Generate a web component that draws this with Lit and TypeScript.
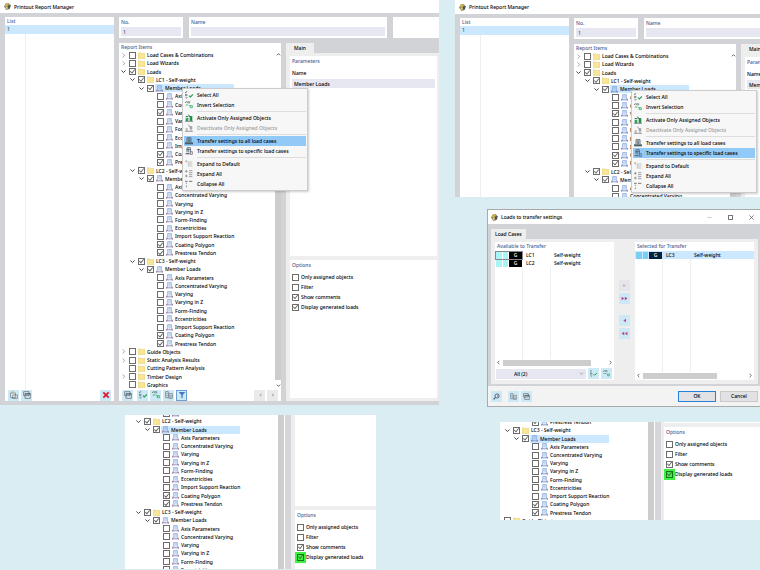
import { LitElement, html, css, svg, nothing } from "lit";
import { customElement, property } from "lit/decorators.js";
import { classMap } from "lit/directives/class-map.js";

type Row = { level: number; label: string; on?: boolean; kind?: "folder" | "member"; exp?: "open" | "closed" };

const ITEMS = [
  "Axis Parameters",
  "Concentrated Varying",
  "Varying",
  "Varying in Z",
  "Form-Finding",
  "Eccentricities",
  "Import Support Reaction",
  "Coating Polygon",
  "Prestress Tendon",
];

const loadCase = (n: number, extra: string[] = []): Row[] => [
  { level: 1, label: `LC${n} - Self-weight`, on: true, kind: "folder", exp: "open" },
  { level: 2, label: "Member Loads", on: true, kind: "member", exp: "open" },
  ...ITEMS.map((label, i) => ({ level: 3, label, on: i > 6 || extra.includes(label), kind: "member" as const })),
];

const FULL: Row[] = [
  { level: 0, label: "Load Cases & Combinations", exp: "closed" },
  { level: 0, label: "Load Wizards", exp: "closed" },
  { level: 0, label: "Loads", on: true, exp: "open" },
  ...loadCase(1, ["Varying"]),
  ...loadCase(2),
  ...loadCase(3),
  { level: 0, label: "Guide Objects", exp: "closed" },
  { level: 0, label: "Static Analysis Results", exp: "closed" },
  { level: 0, label: "Cutting Pattern Analysis" },
  { level: 0, label: "Timber Design", exp: "closed" },
  { level: 0, label: "Graphics" },
];

const ICONS: Record<string, unknown> = {
  app: svg`<path d="M0 6 3 1l5-1 3 4-1 6-6 2z" fill="#8a8560"/><path d="M1 5l4-4 4 0-3 4z" fill="#d8b840"/><path d="M6 5l5-2 0 4-3 4z" fill="#4c5560"/><path d="M3 6h3v4H3z" fill="#e8d070"/>`,
  folder: svg`<path d="M0 1.500h5l1 1h6v9H0z" fill="#f8e694" stroke="#e6d080" stroke-width="1"/>`,
  member: svg`<path d="M2.500 10V1h7v9M5 1v7M7.200 1v7" fill="none" stroke="#7c9fdc" stroke-width="1.100"/><path d="M0 10h12" stroke="#6877b4" stroke-width="1.300"/><path d="M.6 8v3.500M11.400 8v3.500" stroke="#b07090" stroke-width="1.200"/>`,
  select: svg`<path d="M0 1l1 2 2-3M0 5h3v2H0z M1 9l1 2 2-2" fill="none" stroke="#58666a" stroke-width="1"/><path d="M6 7l2 2 4-4" fill="none" stroke="#20a050" stroke-width="1.700"/>`,
  invert: svg`<path d="M0 1l1 2 2-3M4 1h3v2H4z" fill="none" stroke="#58766a" stroke-width="1"/><path d="M1 6h4M6 7h2v3h3V7H8" fill="none" stroke="#30a868" stroke-width="1.200"/>`,
  activate: svg`<path d="M1 6h4v5H1zM7 3h4v8H7z" fill="#30a060"/><path d="M1 4h4M5 1l3 4M9 5v4" stroke="#1b7040" stroke-width="1.500"/><path d="M0 11h12" stroke="#666" stroke-width="1"/>`,
  deactivate: svg`<path d="M1 6h3v5H1zM7 3h4v5H7z" fill="#bbb"/><path d="M5 1l3 4M9 4v7M0 11h12" stroke="#888" stroke-width="1.200"/>`,
  transferAll: svg`<path d="M3 8V1h6v7M5 2v6M7 2v6" fill="none" stroke="#51606c" stroke-width="1.300"/><path d="M0 8h12v3H0z" fill="#4c5c6a"/>`,
  transferOne: svg`<path d="M3 8V1h5v7M5 2v6M2 4h7" fill="none" stroke="#51606c" stroke-width="1.200"/><path d="M1 9h6v2H1z" fill="#66727c"/><path d="M8 7h3v4H8z" fill="none" stroke="#556"/>`,
  expandDef: svg`<path d="M0 2h4M2 0v4M5 3h6M6 6h5M6 9h5M5 3v7" fill="none" stroke="#aaa" stroke-width="1"/>`,
  expandAll: svg`<path d="M0 2h4M2 0v4M0 9h4M2 7v4M6 1h5M6 4h5M6 7h5M6 10h5" fill="none" stroke="#888" stroke-width="1.200"/>`,
  collapse: svg`<path d="M0 2h4M6 2h5" stroke="#777" stroke-width="1.500"/><path d="M2 4v2M2 8v3" stroke="#999" stroke-width="1.500"/>`,
  windows: svg`<path d="M1 1h8v6H1zM3 4h8v7H3z" fill="#dfeaf0" stroke="#4a5a66" stroke-width="1"/><path d="M3 4.500h8" stroke="#4a5a66" stroke-width="1.500"/>`,
  addWindow: svg`<path d="M1 3h7v7H1zM4 6h7v5H4z" fill="#f2f4f4" stroke="#59666e" stroke-width="1"/><path d="M2 1.500h4" stroke="#d0ae40" stroke-width="1.500"/>`,
  list: svg`<path d="M1 1h4v9H1zM6 4h5v7H6z" fill="#e4eef2" stroke="#5a6a74" stroke-width="1"/><path d="M2 4h2M2 7h2M7 7h3M7 9h3" stroke="#5a6a74"/>`,
  filter: svg`<path d="M1 1.500h10L7 6v5L5 10V6z" fill="#4878b8"/>`,
  x: svg`<path d="M2 2l8 8M10 2l-8 8" stroke="#e01830" stroke-width="2.600"/>`,
  left: svg`<path d="M8 3.500L5 6l3 2.500z" fill="#aaa"/>`,
  right: svg`<path d="M5 3.500L8 6 5 8.500z" fill="#aaa"/>`,
  moveR: svg`<path d="M4 3.500L8 6 4 8.500z" fill="#c8a0b8"/>`,
  moveRR: svg`<path d="M1 3l4.500 3L1 9zM6.500 3L11 6 6.500 9z" fill="#b83c98"/>`,
  moveL: svg`<path d="M8.500 3L4 6l4.500 3z" fill="#b83c98"/>`,
  moveLL: svg`<path d="M11 3L6.500 6 11 9zM5.500 3L1 6l4.500 3z" fill="#c83c80"/>`,
  search: svg`<circle cx="7" cy="5" r="3.500" fill="#fff" stroke="#34506a" stroke-width="1.500"/><path d="M4 8l-3 3" stroke="#34506a" stroke-width="2"/><path d="M6 4h3M7 6h2" stroke="#34506a"/>`,
  caretR: svg`<path d="M4 1l5 5-5 5" fill="none" stroke="#777" stroke-width="1.600"/>`,
  caretD: svg`<path d="M1 3.500l5 5 5-5" fill="none" stroke="#333" stroke-width="2.200"/>`,
  up: svg`<path d="M2 8l4-4 4 4" fill="none" stroke="#444" stroke-width="2"/>`,
  down: svg`<path d="M2 4l4 4 4-4" fill="none" stroke="#444" stroke-width="2"/>`,
  arrowL: svg`<path d="M8 2L4 6l4 4" fill="none" stroke="#555" stroke-width="2"/>`,
  arrowR: svg`<path d="M4 2l4 4-4 4" fill="none" stroke="#555" stroke-width="2"/>`,
  min: svg`<path d="M1 6h10" stroke="#aaa" stroke-width="1.500"/>`,
  max: svg`<path d="M1 1h10v10H1z" fill="none" stroke="#333" stroke-width="1.800"/>`,
  close: svg`<path d="M1 1l10 10M11 1L1 11" stroke="#444" stroke-width="1.600"/>`,
};

const icon = (name: string) => html`<svg class="icon" viewBox="0 0 12 12" aria-hidden="true">${ICONS[name]}</svg>`;

const base = css`
  * { box-sizing: border-box; }
  :host { display: block; font: 500 5px/8px "Noto Sans", "Open Sans", sans-serif; color: #000; }
  .icon { width: 7px; height: 7px; flex: none; display: block; }
  button {
    font: inherit; color: inherit; padding: 0; margin: 0; border: 0; background: none;
    display: flex; align-items: center; justify-content: center; flex: none;
  }
  input { font: inherit; color: inherit; margin: 0; }
  input[type="checkbox"] {
    appearance: none; width: 7px; height: 7px; border: 1px solid #6c6c6c; background: #fff; flex: none; display: grid;
  }
  input[type="checkbox"]:checked::before {
    content: ""; background: #555;
    clip-path: polygon(0 50%, 15% 40%, 38% 68%, 88% 5%, 100% 15%, 40% 95%);
  }
  .heading { color: #4a6092; }
  .tool { width: 11px; height: 11px; background: #cde9f6; }
`;

@customElement("report-tree")
class ReportTree extends LitElement {
  @property({ attribute: false }) rows: Row[] = [];
  @property({ type: Number }) selected = -1;

  static styles = [base, css`
    :host { display: grid; grid-auto-rows: 1fr; min-width: 0; }
    .row { display: flex; align-items: center; min-height: 0; white-space: nowrap; }
    .l1 { padding-left: 9px; }
    .l2 { padding-left: 18px; }
    .l3 { padding-left: 28px; }
    .expander { width: 8px; height: 8px; margin: 0 2px 0 0; }
    .expander .icon { width: 5px; height: 5px; }
    .node { display: flex; align-items: center; gap: 2px; height: 8px; margin-left: 1px; padding-left: 1px; min-width: 79px; }
    .picked { background: #cce8ff; }
  `];

  render() {
    return this.rows.map((r, i) => html`
      <div class="row l${r.level}">
        <button class="expander" ?disabled=${!r.exp} aria-label="Toggle ${r.label}">
          ${r.exp ? icon(r.exp === "open" ? "caretD" : "caretR") : nothing}
        </button>
        <input type="checkbox" id="c${i}" ?checked=${r.on} />
        <label for="c${i}" class=${classMap({ node: true, picked: i === this.selected })}>
          ${icon(r.kind ?? "folder")}<span>${r.label}</span>
        </label>
      </div>`);
  }
}

@customElement("load-options")
class LoadOptions extends LitElement {
  @property({ type: Boolean }) marked = false;

  static styles = [base, css`
    :host { display: block; background: #fff; padding: 1px 2px; }
    .heading { margin-bottom: 3px; }
    .option { display: flex; align-items: center; gap: 2px; height: 10px; white-space: nowrap; }
    input.mark { background: #3cf040; box-shadow: 0 0 0 2px #3cf040; border-color: #1c7020; }
  `];

  render() {
    const options: [string, boolean][] = [
      ["Only assigned objects", false], ["Filter", false], ["Show comments", true], ["Display generated loads", true],
    ];
    return html`
      <div class="heading">Options</div>
      ${options.map(([label, on], i) => html`
        <label class="option">
          <input type="checkbox" class=${classMap({ mark: this.marked && i === 3 })} ?checked=${on} />${label}
        </label>`)}`;
  }
}

@customElement("context-menu")
class ContextMenu extends LitElement {
  @property({ type: Number }) active = 4;

  static styles = [base, css`
    :host { display: block; width: 126px; padding: 1px; background: #f7f7f7; border: 1px solid #ccc; box-shadow: 1px 1px 2px #0003; }
    .item { width: 100%; height: 10px; padding-left: 1px; gap: 4px; justify-content: flex-start; white-space: nowrap; }
    .item .icon { width: 8px; height: 8px; }
    .active { background: #91c9f7; }
    .item:disabled { color: #999; }
    .sep { height: 1px; margin: 1px 0 1px 13px; border: 0; background: #ddd; }
  `];

  render() {
    const entries: [string, string][] = [
      ["select", "Select All"], ["invert", "Invert Selection"],
      ["activate", "Activate Only Assigned Objects"], ["deactivate", "Deactivate Only Assigned Objects"],
      ["transferAll", "Transfer settings to all load cases"], ["transferOne", "Transfer settings to specific load cases"],
      ["expandDef", "Expand to Default"], ["expandAll", "Expand All"], ["collapse", "Collapse All"],
    ];
    return entries.map(([ic, label], i) => html`
      ${i === 2 || i === 4 || i === 6 ? html`<hr class="sep" />` : nothing}
      <button class=${classMap({ item: true, active: i === this.active })} ?disabled=${i === 3}>${icon(ic)}${label}</button>`);
  }
}

@customElement("report-manager")
class ReportManager extends LitElement {
  @property({ type: Number }) active = 4;

  static styles = [base, css`
    :host { display: block; background: #d2d3d7; }
    .title { display: flex; align-items: center; gap: 3px; height: 13px; padding-left: 4px; background: #fff; }
    .body { display: flex; gap: 5px; padding: 4px 0 4px 5px; }
    .list { flex: 0 0 109px; background: #fff; display: flex; flex-direction: column; }
    .list .heading { padding-left: 2px; }
    .entry { height: 9px; padding-left: 2px; background: #cce8ff; color: #456; }
    .rule { flex: 1; margin-left: 20px; border-left: 1px solid #eee; }
    .tools { display: flex; align-items: center; gap: 2px; height: 12px; padding: 0 3px; }
    .tools .push { margin-left: auto; }
    .tools .icon { width: 8px; height: 8px; }
    .dim { background: #eaeaea; }
    .on { border: 1px solid #6aa0d8; }
    .main { flex: 1; min-width: 0; display: flex; flex-direction: column; gap: 5px; }
    .fields { display: flex; gap: 6px; height: 21px; }
    .field { background: #fff; padding: 1px 2px 2px; display: flex; flex-direction: column; gap: 1px; }
    .field label { color: #4a6092; }
    .field input { height: 9px; width: 100%; border: 0; padding: 0 2px; background: #e7e7f1; color: #456; }
    .no { flex: 0 0 64px; }
    .name { flex: 0 0 198px; }
    .blank { flex: 1; }
    .lower { display: flex; gap: 5px; }
    .items { flex: 0 0 162px; background: #fff; position: relative; display: flex; flex-direction: column; }
    .items .heading { padding-left: 2px; }
    .scroller { display: flex; }
    report-tree { flex: 1; height: 338px; }
    .bar { width: 6px; display: flex; flex-direction: column; align-items: center; padding: 1px 0; }
    .bar .icon { width: 5px; height: 5px; }
    .thumb { width: 6px; flex: 1; margin: 60px 0 3px; background: #cdcdcd; }
    context-menu { position: absolute; top: 45px; left: 63px; z-index: 2; }
    :host([shifted]) context-menu { top: 46px; left: 57px; }
    :host([shifted]) .title { height: 14px; }
    .detail { flex: 1; min-width: 0; display: flex; flex-direction: column; }
    .tab { align-self: flex-start; height: 10px; padding: 0 8px; background: #eee; }
    .pane { flex: 1; background: #eee; padding: 3px 2px 3px 4px; display: flex; flex-direction: column; gap: 4px; }
    .params { flex: 0 0 200px; background: #fff; padding: 1px 2px; display: flex; flex-direction: column; gap: 2px; }
    .params .heading { margin-bottom: 2px; }
    .params input { height: 9px; width: 100%; border: 0; padding: 0 2px; background: #e7e7f1; }
    load-options { flex: 1; }
  `];

  render() {
    return html`
      <div class="title">${icon("app")}<span>Printout Report Manager</span></div>
      <div class="body">
        <section class="list">
          <div class="heading">List</div>
          <div class="entry">1</div>
          <div class="rule"></div>
          <div class="tools">
            <button class="tool" aria-label="New">${icon("addWindow")}</button>
            <button class="tool" aria-label="Copy">${icon("windows")}</button>
            <button class="tool push" aria-label="Delete">${icon("x")}</button>
          </div>
        </section>
        <div class="main">
          <div class="fields">
            <div class="field no"><label for="no">No.</label><input id="no" value="1" /></div>
            <div class="field name"><label for="name">Name</label><input id="name" /></div>
            <div class="field blank"></div>
          </div>
          <div class="lower">
            <section class="items">
              <div class="heading">Report Items</div>
              <div class="scroller">
                <report-tree .rows=${FULL} .selected=${4}></report-tree>
                <div class="bar">${icon("up")}<div class="thumb"></div>${icon("down")}</div>
              </div>
              <div class="tools">
                <button class="tool" aria-label="Windows">${icon("windows")}</button>
                <span></span>
                <button class="tool" aria-label="Select all">${icon("select")}</button>
                <button class="tool" aria-label="Invert selection">${icon("invert")}</button>
                <button class="tool" aria-label="Tree">${icon("list")}</button>
                <button class="tool on" aria-label="Filter">${icon("filter")}</button>
                <button class="tool dim push" aria-label="Previous">${icon("left")}</button>
                <button class="tool dim" aria-label="Next">${icon("right")}</button>
              </div>
              <context-menu .active=${this.active}></context-menu>
            </section>
            <section class="detail">
              <button class="tab">Main</button>
              <div class="pane">
                <div class="params">
                  <div class="heading">Parameters</div>
                  <label for="pname">Name</label>
                  <input id="pname" value="Member Loads" />
                </div>
                <load-options></load-options>
              </div>
            </section>
          </div>
        </div>
      </div>`;
  }
}

@customElement("transfer-dialog")
class TransferDialog extends LitElement {
  static styles = [base, css`
    :host { display: block; background: #d2d3d7; border: 1px solid #aaa; border-right: 0; }
    .title { display: flex; align-items: center; gap: 3px; height: 14px; padding: 0 2px 0 3px; background: #fff; }
    .title span { flex: 1; }
    .title button { width: 13px; margin-left: 5px; }
    .title button .icon { width: 5px; height: 5px; }
    .body { padding: 5px 2px 2px 3px; }
    .tab { height: 10px; padding: 0 4px; background: #eee; }
    .pane { display: flex; gap: 5px; background: #eee; padding: 3px 4px 4px; }
    .side { flex: 1; min-width: 0; height: 138px; background: #fff; display: flex; flex-direction: column; padding: 0 0 1px; }
    .side .heading { padding-left: 2px; margin-bottom: 1px; }
    table { border-collapse: collapse; table-layout: fixed; width: 100%; flex: none; }
    td { height: 8px; padding: 0 0 0 3px; white-space: nowrap; }
    .swatches { width: 28px; padding: 0 1px; }
    .sw { display: flex; gap: 1px; }
    .c { flex: 1; height: 7px; background: #a8f4f8; }
    .g { width: 13px; height: 7px; background: #000; color: #fff; line-height: 7px; text-align: center; }
    .code { width: 28px; }
    .picked { background: #cce8ff; }
    .picked .c { background: #7ad0f4; }
    .picked .g { background: #06203c; }
    .focus .sw { outline: 1px solid #888; }
    .grid { flex: 1; display: flex; }
    .col { width: 28px; border-right: 1px solid #eee; }
    .hbar { display: flex; align-items: center; gap: 2px; height: 7px; padding: 0 1px; }
    .hbar .icon { width: 5px; height: 5px; }
    .track { flex: 1; }
    .thumb { width: 85%; height: 6px; background: #cdcdcd; }
    .short { width: 72%; }
    .filter { display: flex; align-items: center; gap: 2px; padding: 2px 2px 0 1px; }
    select {
      flex: 1; min-width: 0; height: 10px; appearance: none; border: 0; padding: 0 0 0 18px; font: inherit; color: inherit;
      background: #e7e7f1;
    }
    .combo { flex: 1; display: flex; align-items: center; background: #e7e7f1; padding-right: 2px; }
    .combo .icon { width: 5px; height: 5px; opacity: 0.5; }
    .moves { flex: 0 0 11px; display: flex; flex-direction: column; gap: 2px; padding-top: 38px; }
    .moves .icon { width: 7px; height: 7px; }
    .off { background: #e6e6ea; }
    .gap { margin-top: 9px; }
    .footer { display: flex; align-items: center; gap: 2px; height: 20px; padding: 0 2px 0 3px; background: #f3f3f4; }
    .cmd { width: 38px; height: 11px; background: #e2e2e4; border: 1px solid #c8c8c8; }
    .ok { margin-left: auto; margin-right: 2px; border-color: #2880d8; }
    .sp { margin-right: 4px; }
  `];

  private grid(rows: [string, string][]) {
    return html`
      <table>${rows.map(([code, cls]) => html`
        <tr class=${cls}>
          <td class="swatches"><div class="sw"><i class="c"></i><i class="c"></i><div class="g">G</div></div></td>
          <td class="code">${code}</td><td>Self-weight</td>
        </tr>`)}
      </table>
      <div class="grid"><div class="col"></div><div class="col"></div></div>`;
  }

  private hbar(cls: string) {
    return html`<div class="hbar">${icon("arrowL")}<div class="track"><div class="thumb ${cls}"></div></div>${icon("arrowR")}</div>`;
  }

  render() {
    return html`
      <div class="title">${icon("app")}<span>Loads to transfer settings</span>
        <button aria-label="Minimize">${icon("min")}</button>
        <button aria-label="Maximize">${icon("max")}</button>
        <button aria-label="Close">${icon("close")}</button>
      </div>
      <div class="body">
        <button class="tab">Load Cases</button>
        <div class="pane">
          <section class="side">
            <div class="heading">Available to Transfer</div>
            ${this.grid([["LC1", "focus"], ["LC2", ""]])}
            ${this.hbar("")}
            <div class="filter">
              <div class="combo"><select aria-label="Filter"><option>All (2)</option></select>${icon("down")}</div>
              <button class="tool" aria-label="Select all">${icon("select")}</button>
              <button class="tool" aria-label="Invert">${icon("invert")}</button>
            </div>
          </section>
          <div class="moves">
            <button class="tool off" aria-label="Add">${icon("moveR")}</button>
            <button class="tool" aria-label="Add all">${icon("moveRR")}</button>
            <button class="tool gap" aria-label="Remove">${icon("moveL")}</button>
            <button class="tool" aria-label="Remove all">${icon("moveLL")}</button>
          </div>
          <section class="side">
            <div class="heading">Selected for Transfer</div>
            ${this.grid([["LC3", "picked"]])}
            ${this.hbar("short")}
          </section>
        </div>
      </div>
      <div class="footer">
        <button class="tool sp" aria-label="Help">${icon("search")}</button>
        <button class="tool" aria-label="Copy">${icon("list")}</button>
        <button class="tool" aria-label="Paste">${icon("windows")}</button>
        <button class="cmd ok">OK</button>
        <button class="cmd">Cancel</button>
      </div>`;
  }
}

@customElement("app-root")
class AppRoot extends LitElement {
  static styles = [base, css`
    :host { display: grid; grid-template-columns: 455fr 305fr; min-height: 100vh; background: #d9edf2; overflow: hidden; }
    .column { min-width: 0; display: flex; flex-direction: column; }
    .first { margin-right: 16px; }
    .cut { height: 197px; overflow: hidden; margin-bottom: 12px; }
    .wide { width: 144%; }
    transfer-dialog { margin-left: 32px; }
    .excerpt { display: flex; overflow: hidden; background: #fff; }
    .excerpt report-tree { flex: 1; }
    .strip { flex: none; width: 6px; background: #cdcdcd; }
    .light { background: #d6d6da; margin-left: 1px; }
    .side { flex: none; display: flex; flex-direction: column; gap: 4px; background: #eee; padding-left: 4px; }
    .side load-options { flex: 1; }
    .upper { background: #fff; }
    .a { height: 154px; margin: 10px 79px 0 125px; }
    .a report-tree { height: 165px; margin-top: -6px; }
    .a .side { width: 85px; }
    .a .upper { height: 91px; }
    .b { height: 98px; margin: 15px 0 0 45px; }
    .b report-tree { height: 107px; margin: -4px 0 0 -6px; }
    .b .side { width: 99px; padding-left: 3px; }
    .b .upper { height: 1px; }
  `];

  render() {
    const a = [FULL[13], ...loadCase(2), ...loadCase(3).slice(0, 8)];
    const b = [FULL[13], ...loadCase(3), FULL[36]];
    return html`
      <div class="column">
        <report-manager class="first"></report-manager>
        <div class="excerpt a">
          <report-tree .rows=${a} .selected=${2}></report-tree>
          <div class="strip"></div><div class="strip light"></div>
          <div class="side"><div class="upper"></div><load-options marked></load-options></div>
        </div>
      </div>
      <div class="column">
        <div class="cut"><report-manager class="wide" shifted .active=${5}></report-manager></div>
        <transfer-dialog></transfer-dialog>
        <div class="excerpt b">
          <report-tree .rows=${b} .selected=${2}></report-tree>
          <div class="strip"></div><div class="strip light"></div>
          <div class="side"><div class="upper"></div><load-options marked></load-options></div>
        </div>
      </div>`;
  }
}
